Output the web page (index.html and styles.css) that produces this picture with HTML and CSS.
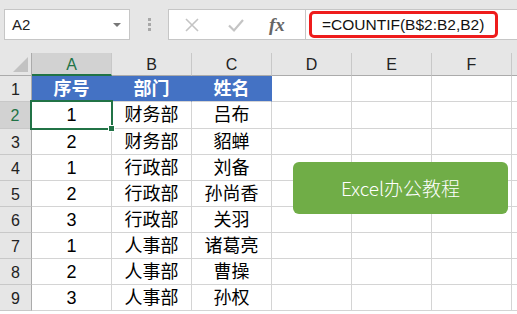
FILE: index.html
```html
<!DOCTYPE html>
<html lang="zh-CN">
<head>
    <meta charset="UTF-8">
    <title>COUNTIF 分组序号</title>
    <link rel="stylesheet" href="styles.css">
</head>
<body>
    <div class="toolbar">
        <div class="name-box">
            <span>A2</span>
            <span class="drop"></span>
        </div>
        <div class="grip"><i></i><i></i><i></i></div>
        <div class="fx-box">
            <svg class="ico" width="16" height="16" viewBox="0 0 16 16"><path d="M2 2 L14 14 M14 2 L2 14" stroke="#c4c4c4" stroke-width="1.6" fill="none"/></svg>
            <svg class="ico" width="18" height="16" viewBox="0 0 18 16"><path d="M2 8.5 L7 13.5 L16 3" stroke="#c4c4c4" stroke-width="2.2" fill="none"/></svg>
            <span class="fx">fx</span>
        </div>
        <div class="formula">
            <span class="formula-text">=COUNTIF(B$2:B2,B2)</span>
        </div>
    </div>

    <div class="sheet">
        <div class="corner"><span class="tri"></span></div>
        <div class="col-head active">A</div>
        <div class="col-head">B</div>
        <div class="col-head">C</div>
        <div class="col-head">D</div>
        <div class="col-head">E</div>
        <div class="col-head">F</div>
        <div class="col-head last"></div>

        <div class="row-head">1</div>
        <div class="cell th">序号</div>
        <div class="cell th">部门</div>
        <div class="cell th">姓名</div>
        <div class="cell"></div><div class="cell"></div><div class="cell"></div><div class="cell last"></div>

        <div class="row-head active">2</div>
        <div class="cell selected">1<span class="handle"></span></div>
        <div class="cell">财务部</div>
        <div class="cell">吕布</div>
        <div class="cell"></div><div class="cell"></div><div class="cell"></div><div class="cell last"></div>

        <div class="row-head">3</div>
        <div class="cell">2</div>
        <div class="cell">财务部</div>
        <div class="cell">貂蝉</div>
        <div class="cell"></div><div class="cell"></div><div class="cell"></div><div class="cell last"></div>

        <div class="row-head">4</div>
        <div class="cell">1</div>
        <div class="cell">行政部</div>
        <div class="cell">刘备</div>
        <div class="cell"></div><div class="cell"></div><div class="cell"></div><div class="cell last"></div>

        <div class="row-head">5</div>
        <div class="cell">2</div>
        <div class="cell">行政部</div>
        <div class="cell">孙尚香</div>
        <div class="cell"></div><div class="cell"></div><div class="cell"></div><div class="cell last"></div>

        <div class="row-head">6</div>
        <div class="cell">3</div>
        <div class="cell">行政部</div>
        <div class="cell">关羽</div>
        <div class="cell"></div><div class="cell"></div><div class="cell"></div><div class="cell last"></div>

        <div class="row-head">7</div>
        <div class="cell">1</div>
        <div class="cell">人事部</div>
        <div class="cell">诸葛亮</div>
        <div class="cell"></div><div class="cell"></div><div class="cell"></div><div class="cell last"></div>

        <div class="row-head">8</div>
        <div class="cell">2</div>
        <div class="cell">人事部</div>
        <div class="cell">曹操</div>
        <div class="cell"></div><div class="cell"></div><div class="cell"></div><div class="cell last"></div>

        <div class="row-head">9</div>
        <div class="cell">3</div>
        <div class="cell">人事部</div>
        <div class="cell">孙权</div>
        <div class="cell"></div><div class="cell"></div><div class="cell"></div><div class="cell last"></div>

        <div class="shape">Excel办公教程</div>
    </div>
</body>
</html>
```

FILE: styles.css
```css
body {
    margin: 0;
    width: 517px;
    height: 314px;
    overflow: hidden;
    background: #ffffff;
    font-family: "Liberation Sans", "Noto Sans CJK SC", sans-serif;
    color: #000;
}
.toolbar {
    height: 53px;
    background: #e6e6e6;
    display: flex;
    align-items: flex-start;
    padding-top: 9px;
    box-sizing: border-box;
}
.name-box {
    margin-left: 4px;
    width: 126px;
    height: 31px;
    box-sizing: border-box;
    background: #fff;
    border: 1px solid #c6c6c6;
    display: flex;
    align-items: center;
    justify-content: space-between;
    padding: 0 8px 0 7px;
    font-size: 15px;
    color: #222;
}
.drop {
    width: 0;
    height: 0;
    border-left: 4px solid transparent;
    border-right: 4px solid transparent;
    border-top: 4px solid #777;
}
.grip {
    width: 38px;
    height: 31px;
    display: flex;
    flex-direction: column;
    align-items: center;
    justify-content: center;
    gap: 2px;
}
.grip i {
    width: 3px;
    height: 3px;
    background: #a8a8a8;
}
.fx-box {
    width: 137px;
    height: 31px;
    box-sizing: border-box;
    background: #fff;
    border: 1px solid #c6c6c6;
    border-right: none;
    display: flex;
    align-items: center;
    padding-left: 15px;
    gap: 27px;
}
.fx {
    font-family: "Liberation Serif", serif;
    font-style: italic;
    font-weight: bold;
    font-size: 19px;
    color: #666;
    margin-left: -3px;
}
.formula {
    flex: 1;
    height: 31px;
    box-sizing: border-box;
    background: #fff;
    border: 1px solid #c6c6c6;
    border-right: none;
    padding: 0 0 0 3px;
}
.formula-text {
    display: inline-block;
    width: 189px;
    height: 27px;
    margin-top: 1px;
    box-sizing: border-box;
    border: 3px solid #ee1c1c;
    border-radius: 5px;
    font-size: 15.5px;
    line-height: 21px;
    padding-left: 10px;
    color: #111;
}
.sheet {
    position: relative;
    display: grid;
    grid-template-columns: 32px repeat(6, 80px) 1fr;
    grid-template-rows: 23px 26px 27px repeat(7, 26px);
}
.corner, .col-head {
    background: #e6e6e6;
    border-bottom: 1px solid #ababab;
    box-sizing: border-box;
}
.corner {
    position: relative;
    border-right: 1px solid #ababab;
}
.tri {
    position: absolute;
    right: 3px;
    bottom: 3px;
    width: 0;
    height: 0;
    border-left: 15px solid transparent;
    border-bottom: 15px solid #c2c2c2;
}
.col-head {
    border-right: 1px solid #c8c8c8;
    text-align: center;
    font-size: 16px;
    line-height: 24px;
    color: #222;
}
.col-head.active {
    background: #d2d2d2;
    color: #217346;
    border-bottom: 2px solid #217346;
}
.col-head.last, .cell.last {
    border-right: none;
}
.row-head {
    background: #e6e6e6;
    border-right: 1px solid #ababab;
    border-bottom: 1px solid #c8c8c8;
    box-sizing: border-box;
    text-align: center;
    font-size: 16px;
    line-height: 28px;
    color: #222;
}
.row-head.active {
    background: #d2d2d2;
    color: #217346;
    border-right: 2px solid #217346;
}
.cell {
    border-right: 1px solid #d4d4d4;
    border-bottom: 1px solid #d4d4d4;
    box-sizing: border-box;
    text-align: center;
    font-size: 18px;
    line-height: 26px;
    color: #000;
}
.cell.th {
    background: #4472c4;
    color: #fff;
    font-weight: bold;
    border-right-color: #4472c4;
}
.cell.selected {
    position: relative;
}
.cell.selected::before {
    content: "";
    position: absolute;
    left: -2px;
    top: -2px;
    right: -2px;
    bottom: -2px;
    border: 2px solid #217346;
}
.handle {
    position: absolute;
    right: -4px;
    bottom: -4px;
    width: 5px;
    height: 5px;
    background: #217346;
    border: 1px solid #fff;
}
.shape {
    position: absolute;
    left: 293px;
    top: 109px;
    width: 215px;
    height: 52px;
    background: #70ad47;
    border-radius: 6px;
    color: #fff;
    font-size: 19px;
    line-height: 52px;
    text-align: center;
    font-family: "Noto Sans CJK SC", sans-serif;
    font-weight: 300;
}
```
